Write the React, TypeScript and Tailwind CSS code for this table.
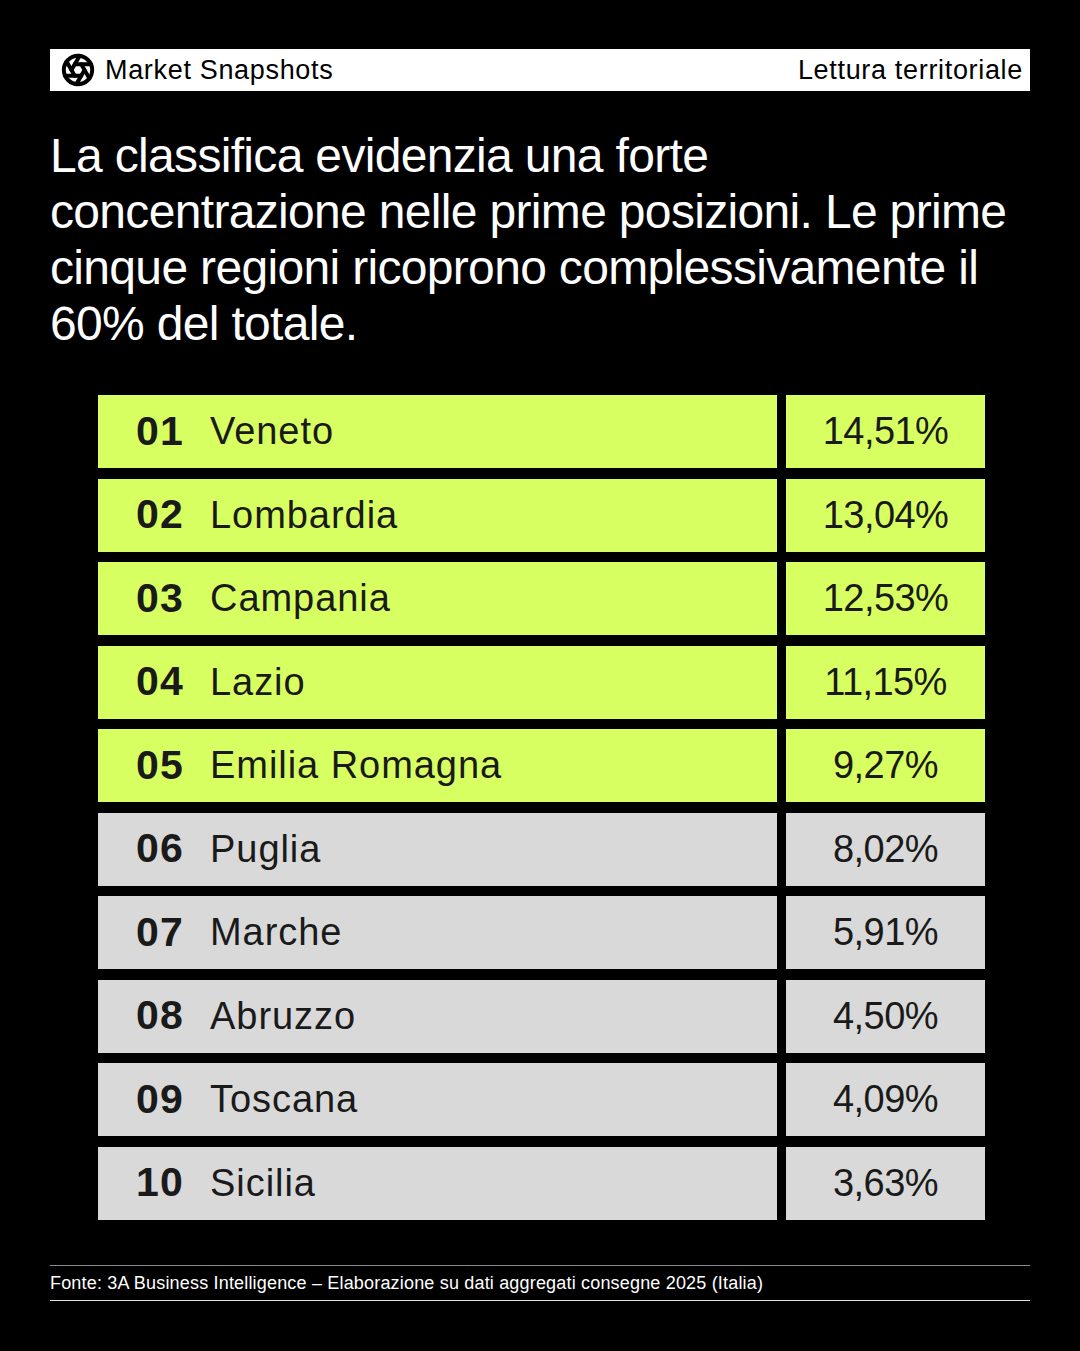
import React from "react";

const rows = [
  { n: "01", name: "Veneto", v: "14,51%", hi: true },
  { n: "02", name: "Lombardia", v: "13,04%", hi: true },
  { n: "03", name: "Campania", v: "12,53%", hi: true },
  { n: "04", name: "Lazio", v: "11,15%", hi: true },
  { n: "05", name: "Emilia Romagna", v: "9,27%", hi: true },
  { n: "06", name: "Puglia", v: "8,02%", hi: false },
  { n: "07", name: "Marche", v: "5,91%", hi: false },
  { n: "08", name: "Abruzzo", v: "4,50%", hi: false },
  { n: "09", name: "Toscana", v: "4,09%", hi: false },
  { n: "10", name: "Sicilia", v: "3,63%", hi: false },
];

function Logo() {
  return (
    <svg width="34" height="34" viewBox="0 0 24 24" fill="none" stroke="#000" strokeWidth="2.8" strokeLinecap="round" strokeLinejoin="round">
      <circle cx="12" cy="12" r="10" />
      <path d="m14.31 8 5.74 9.94" />
      <path d="M9.69 8h11.48" />
      <path d="m7.38 12 5.74-9.94" />
      <path d="M9.69 16 3.95 6.06" />
      <path d="M14.31 16H2.83" />
      <path d="m16.62 12-5.74 9.94" />
    </svg>
  );
}

export default function App() {
  return (
    <div
      className="w-[1080px] h-[1351px] bg-black px-[50px] pt-[49px] overflow-hidden"
      style={{ fontFamily: '"Liberation Sans", Arial, sans-serif' }}
    >
      <div className="h-[42px] bg-white flex items-center justify-between pl-[11px] pr-[7px] text-black">
        <div className="flex items-center gap-[10px]">
          <Logo />
          <span className="text-[27px] tracking-[0.025em] leading-none">Market Snapshots</span>
        </div>
        <span className="text-[27px] tracking-[0.025em] leading-none">Lettura territoriale</span>
      </div>

      <h1 className="mt-[37px] text-white text-[48px] leading-[56px] tracking-[-0.014em] font-normal">
        La classifica evidenzia una forte
        <br />
        concentrazione nelle prime posizioni. Le prime
        <br />
        cinque regioni ricoprono complessivamente il
        <br />
        60% del totale.
      </h1>

      <div className="mt-[43px] ml-[48px] w-[887px] flex flex-col gap-[10.5px]">
        {rows.map((r) => {
          const bg = r.hi ? "bg-[#d8ff61]" : "bg-[#d9d9d9]";
          return (
            <div key={r.n} className="flex h-[73px] gap-[9px] text-[#1a1a1a]">
              <div className={`${bg} flex-1 flex items-center pl-[38px]`}>
                <span className="w-[74px] text-[41px] font-bold tracking-[0.03em]">{r.n}</span>
                <span className="text-[38px] tracking-[0.025em]">{r.name}</span>
              </div>
              <div className={`${bg} w-[199px] flex items-center justify-center`}>
                <span className="text-[38px] tracking-[-0.015em]">{r.v}</span>
              </div>
            </div>
          );
        })}
      </div>

      <div className="mt-[45px] border-t border-[#8a8a8a] border-b border-b-[#e5e5e5] h-[36px] flex items-center">
        <span className="text-white text-[18px] tracking-[0.01em] leading-none">
          Fonte: 3A Business Intelligence – Elaborazione su dati aggregati consegne 2025 (Italia)
        </span>
      </div>
    </div>
  );
}
